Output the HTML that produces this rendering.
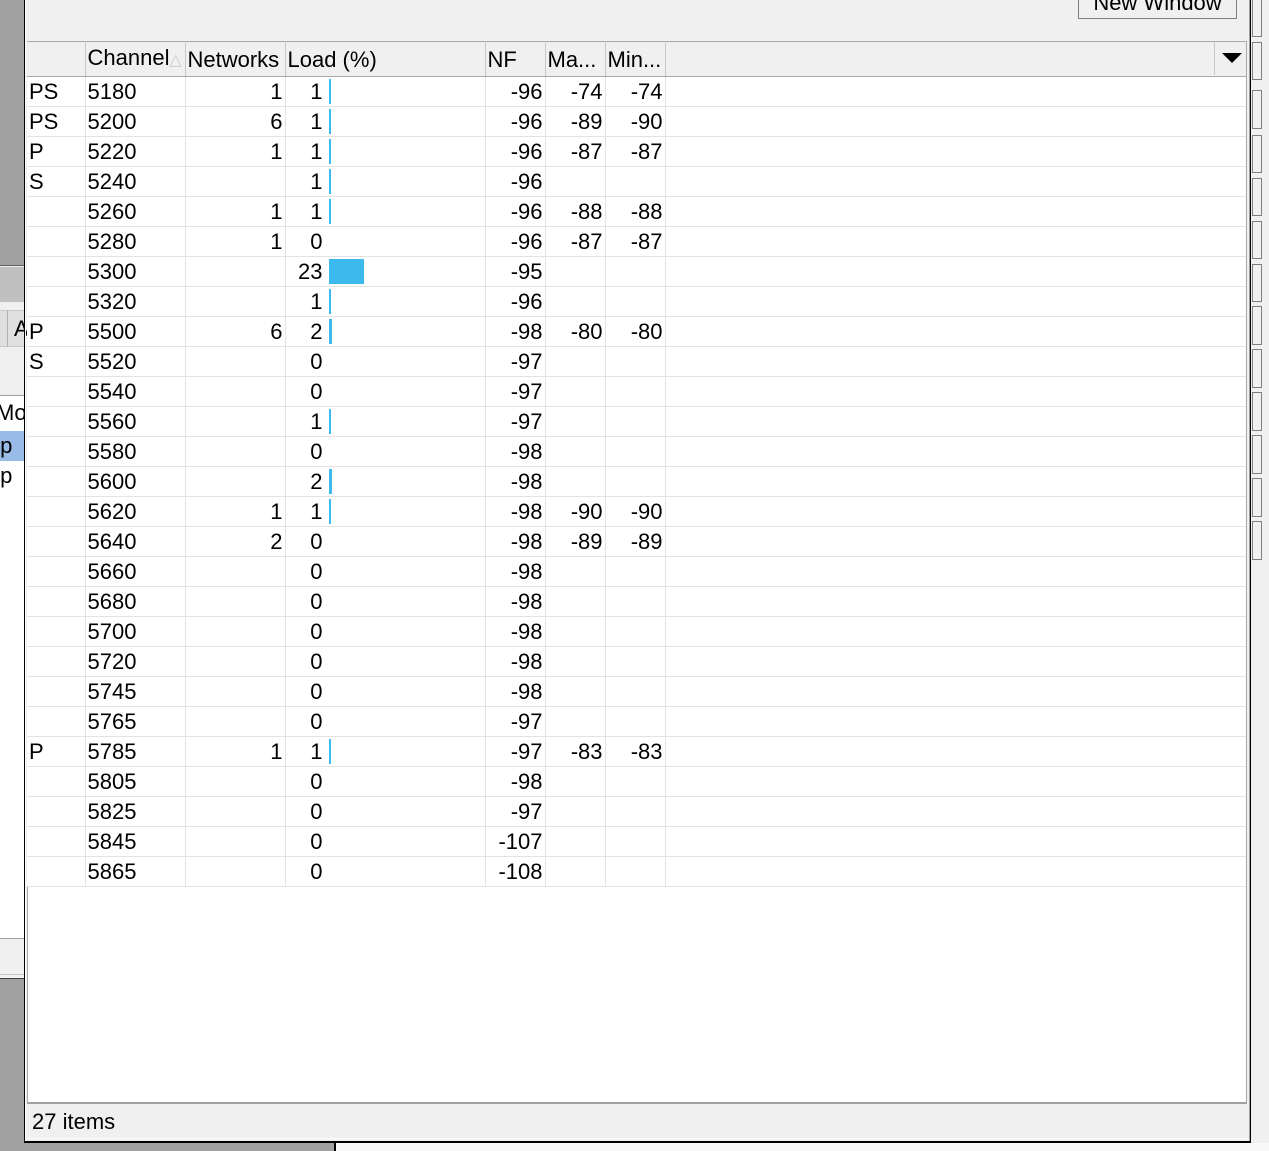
<!DOCTYPE html>
<html><head><meta charset="utf-8">
<style>
*{margin:0;padding:0;box-sizing:border-box}
body{width:1269px;height:1151px;overflow:hidden;position:relative;background:#f0f0f0;font-family:"Liberation Sans",Arial,sans-serif;font-size:22px;color:#000}
.abs{position:absolute}
table{position:absolute;left:27px;top:41px;width:1219px;border-collapse:collapse;table-layout:fixed;background:#fff}
td,th{height:30px;line-height:29px;white-space:nowrap;overflow:hidden;font-weight:normal}
th{background:#f0f0f0;border-top:1px solid #a8a8a8;border-bottom:1px solid #a8a8a8;border-right:1px solid #c8c8c8;height:32px;line-height:31px;text-align:left;padding-left:2px}
td{border-bottom:1px solid #e3e3e3;border-right:1px solid #e3e3e3;padding:0 2px}
td.r{text-align:right}
td.l{padding:0}
.n{display:inline-block;width:37px;text-align:right;vertical-align:top}
.b{display:inline-block;height:25px;margin-left:6px;margin-top:2px;background:#3dbaed;vertical-align:top}
td:last-child,th:last-child{border-right:none}
</style></head><body>
<div class="abs" style="left:0;top:0;width:24px;height:266px;background:#a0a0a0;border-bottom:1px solid #606060"></div>
<div class="abs" style="left:0;top:267px;width:24px;height:35px;background:#c0c0c0"></div>
<div class="abs" style="left:0;top:310px;width:24px;height:37px;background:#e0e0e0;border-top:1px solid #c8c8c8;border-bottom:1px solid #c8c8c8"></div>
<div class="abs" style="left:7px;top:310px;width:1px;height:37px;background:#b0b0b0"></div>
<div class="abs" style="left:14px;top:316px;line-height:26px">A</div>
<div class="abs" style="left:0;top:395px;width:24px;height:543px;background:#fff;border-top:1px solid #a0a0a0;overflow:hidden">
<div style="position:absolute;left:-4px;top:4px;line-height:26px">Moc</div>
<div style="position:absolute;left:0;top:35px;width:24px;height:30px;background:#99bbe8"></div>
<div style="position:absolute;left:-6px;top:37px;line-height:26px">ıp</div>
<div style="position:absolute;left:-6px;top:67px;line-height:26px">ıp</div>
</div>
<div class="abs" style="left:0;top:938px;width:24px;height:37px;background:#f0f0f0;border-top:1px solid #a0a0a0;border-bottom:1px solid #c8c8c8"></div>
<div class="abs" style="left:0;top:978px;width:24px;height:173px;background:#a0a0a0;border-top:1px solid #404040"></div>
<div class="abs" style="left:0;top:1143px;width:334px;height:8px;background:#a0a0a0"></div>
<div class="abs" style="left:334px;top:1143px;width:2px;height:8px;background:#000"></div>
<div class="abs" style="left:336px;top:1143px;width:933px;height:8px;background:#f8f8f8"></div>
<div class="abs" style="left:1251px;top:0;width:18px;height:1143px;background:#f0f0f0"></div>
<div class="abs" style="left:1252px;top:-5px;width:10px;height:42px;border:1px solid #808080;background:#f0f0f0"></div>
<div class="abs" style="left:1252px;top:42px;width:10px;height:38px;border:1px solid #808080;background:#f0f0f0"></div>
<div class="abs" style="left:1252px;top:90px;width:10px;height:39px;border:1px solid #808080;background:#f0f0f0"></div>
<div class="abs" style="left:1252px;top:135px;width:10px;height:38px;border:1px solid #808080;background:#f0f0f0"></div>
<div class="abs" style="left:1252px;top:178px;width:10px;height:38px;border:1px solid #808080;background:#f0f0f0"></div>
<div class="abs" style="left:1252px;top:221px;width:10px;height:38px;border:1px solid #808080;background:#f0f0f0"></div>
<div class="abs" style="left:1252px;top:264px;width:10px;height:38px;border:1px solid #808080;background:#f0f0f0"></div>
<div class="abs" style="left:1252px;top:306px;width:10px;height:39px;border:1px solid #808080;background:#f0f0f0"></div>
<div class="abs" style="left:1252px;top:349px;width:10px;height:39px;border:1px solid #808080;background:#f0f0f0"></div>
<div class="abs" style="left:1252px;top:392px;width:10px;height:39px;border:1px solid #808080;background:#f0f0f0"></div>
<div class="abs" style="left:1252px;top:435px;width:10px;height:39px;border:1px solid #808080;background:#f0f0f0"></div>
<div class="abs" style="left:1252px;top:478px;width:10px;height:39px;border:1px solid #808080;background:#f0f0f0"></div>
<div class="abs" style="left:1252px;top:521px;width:10px;height:39px;border:1px solid #808080;background:#f0f0f0"></div>
<div class="abs" style="left:24px;top:0;width:2px;height:1143px;background:#000;border-right:1px solid #fff"></div>
<div class="abs" style="left:1249px;top:0;width:2px;height:1143px;background:#000;border-left:1px solid #a0a0a0"></div>
<div class="abs" style="left:24px;top:1141px;width:1227px;height:2px;background:#000"></div>
<div class="abs" style="left:1078px;top:-12px;width:159px;height:31px;border:1px solid #808080;background:#f0f0f0;text-align:center;line-height:28px">New Window</div>
<div class="abs" style="left:27px;top:41px;width:1220px;height:1063px;background:#fff;border-left:1px solid #a8a8a8;border-right:1px solid #a8a8a8;border-bottom:2px solid #a0a0a0"></div>
<table>
<colgroup><col style="width:58px"><col style="width:100px"><col style="width:100px"><col style="width:200px"><col style="width:60px"><col style="width:60px"><col style="width:60px"><col></colgroup>
<tr><th></th><th>Channel<span style="color:#ccc;font-size:16px">&#9651;</span></th><th>Networks</th><th>Load (%)</th><th>NF</th><th>Ma...</th><th>Min...</th><th style="position:relative"><svg style="position:absolute;right:4px;top:11px" width="20" height="11"><polygon points="0,0 20,0 10,10" fill="#000"/></svg><span style="position:absolute;right:31px;top:0;width:1px;height:33px;background:#c8c8c8"></span></th></tr>
<tr><td>PS</td><td>5180</td><td class="r">1</td><td class="l"><span class="n">1</span><span class="b" style="width:2px"></span></td><td class="r">-96</td><td class="r">-74</td><td class="r">-74</td><td></td></tr>
<tr><td>PS</td><td>5200</td><td class="r">6</td><td class="l"><span class="n">1</span><span class="b" style="width:2px"></span></td><td class="r">-96</td><td class="r">-89</td><td class="r">-90</td><td></td></tr>
<tr><td>P</td><td>5220</td><td class="r">1</td><td class="l"><span class="n">1</span><span class="b" style="width:2px"></span></td><td class="r">-96</td><td class="r">-87</td><td class="r">-87</td><td></td></tr>
<tr><td>S</td><td>5240</td><td class="r"></td><td class="l"><span class="n">1</span><span class="b" style="width:2px"></span></td><td class="r">-96</td><td class="r"></td><td class="r"></td><td></td></tr>
<tr><td></td><td>5260</td><td class="r">1</td><td class="l"><span class="n">1</span><span class="b" style="width:2px"></span></td><td class="r">-96</td><td class="r">-88</td><td class="r">-88</td><td></td></tr>
<tr><td></td><td>5280</td><td class="r">1</td><td class="l"><span class="n">0</span></td><td class="r">-96</td><td class="r">-87</td><td class="r">-87</td><td></td></tr>
<tr><td></td><td>5300</td><td class="r"></td><td class="l"><span class="n">23</span><span class="b" style="width:35px"></span></td><td class="r">-95</td><td class="r"></td><td class="r"></td><td></td></tr>
<tr><td></td><td>5320</td><td class="r"></td><td class="l"><span class="n">1</span><span class="b" style="width:2px"></span></td><td class="r">-96</td><td class="r"></td><td class="r"></td><td></td></tr>
<tr><td>P</td><td>5500</td><td class="r">6</td><td class="l"><span class="n">2</span><span class="b" style="width:3px"></span></td><td class="r">-98</td><td class="r">-80</td><td class="r">-80</td><td></td></tr>
<tr><td>S</td><td>5520</td><td class="r"></td><td class="l"><span class="n">0</span></td><td class="r">-97</td><td class="r"></td><td class="r"></td><td></td></tr>
<tr><td></td><td>5540</td><td class="r"></td><td class="l"><span class="n">0</span></td><td class="r">-97</td><td class="r"></td><td class="r"></td><td></td></tr>
<tr><td></td><td>5560</td><td class="r"></td><td class="l"><span class="n">1</span><span class="b" style="width:2px"></span></td><td class="r">-97</td><td class="r"></td><td class="r"></td><td></td></tr>
<tr><td></td><td>5580</td><td class="r"></td><td class="l"><span class="n">0</span></td><td class="r">-98</td><td class="r"></td><td class="r"></td><td></td></tr>
<tr><td></td><td>5600</td><td class="r"></td><td class="l"><span class="n">2</span><span class="b" style="width:3px"></span></td><td class="r">-98</td><td class="r"></td><td class="r"></td><td></td></tr>
<tr><td></td><td>5620</td><td class="r">1</td><td class="l"><span class="n">1</span><span class="b" style="width:2px"></span></td><td class="r">-98</td><td class="r">-90</td><td class="r">-90</td><td></td></tr>
<tr><td></td><td>5640</td><td class="r">2</td><td class="l"><span class="n">0</span></td><td class="r">-98</td><td class="r">-89</td><td class="r">-89</td><td></td></tr>
<tr><td></td><td>5660</td><td class="r"></td><td class="l"><span class="n">0</span></td><td class="r">-98</td><td class="r"></td><td class="r"></td><td></td></tr>
<tr><td></td><td>5680</td><td class="r"></td><td class="l"><span class="n">0</span></td><td class="r">-98</td><td class="r"></td><td class="r"></td><td></td></tr>
<tr><td></td><td>5700</td><td class="r"></td><td class="l"><span class="n">0</span></td><td class="r">-98</td><td class="r"></td><td class="r"></td><td></td></tr>
<tr><td></td><td>5720</td><td class="r"></td><td class="l"><span class="n">0</span></td><td class="r">-98</td><td class="r"></td><td class="r"></td><td></td></tr>
<tr><td></td><td>5745</td><td class="r"></td><td class="l"><span class="n">0</span></td><td class="r">-98</td><td class="r"></td><td class="r"></td><td></td></tr>
<tr><td></td><td>5765</td><td class="r"></td><td class="l"><span class="n">0</span></td><td class="r">-97</td><td class="r"></td><td class="r"></td><td></td></tr>
<tr><td>P</td><td>5785</td><td class="r">1</td><td class="l"><span class="n">1</span><span class="b" style="width:2px"></span></td><td class="r">-97</td><td class="r">-83</td><td class="r">-83</td><td></td></tr>
<tr><td></td><td>5805</td><td class="r"></td><td class="l"><span class="n">0</span></td><td class="r">-98</td><td class="r"></td><td class="r"></td><td></td></tr>
<tr><td></td><td>5825</td><td class="r"></td><td class="l"><span class="n">0</span></td><td class="r">-97</td><td class="r"></td><td class="r"></td><td></td></tr>
<tr><td></td><td>5845</td><td class="r"></td><td class="l"><span class="n">0</span></td><td class="r">-107</td><td class="r"></td><td class="r"></td><td></td></tr>
<tr><td></td><td>5865</td><td class="r"></td><td class="l"><span class="n">0</span></td><td class="r">-108</td><td class="r"></td><td class="r"></td><td></td></tr>
</table>
<div class="abs" style="left:27px;top:1105px;width:1220px;height:34px;background:#f0f0f0;border-bottom:1px solid #fff;padding-left:5px;line-height:34px">27 items</div>
</body></html>
